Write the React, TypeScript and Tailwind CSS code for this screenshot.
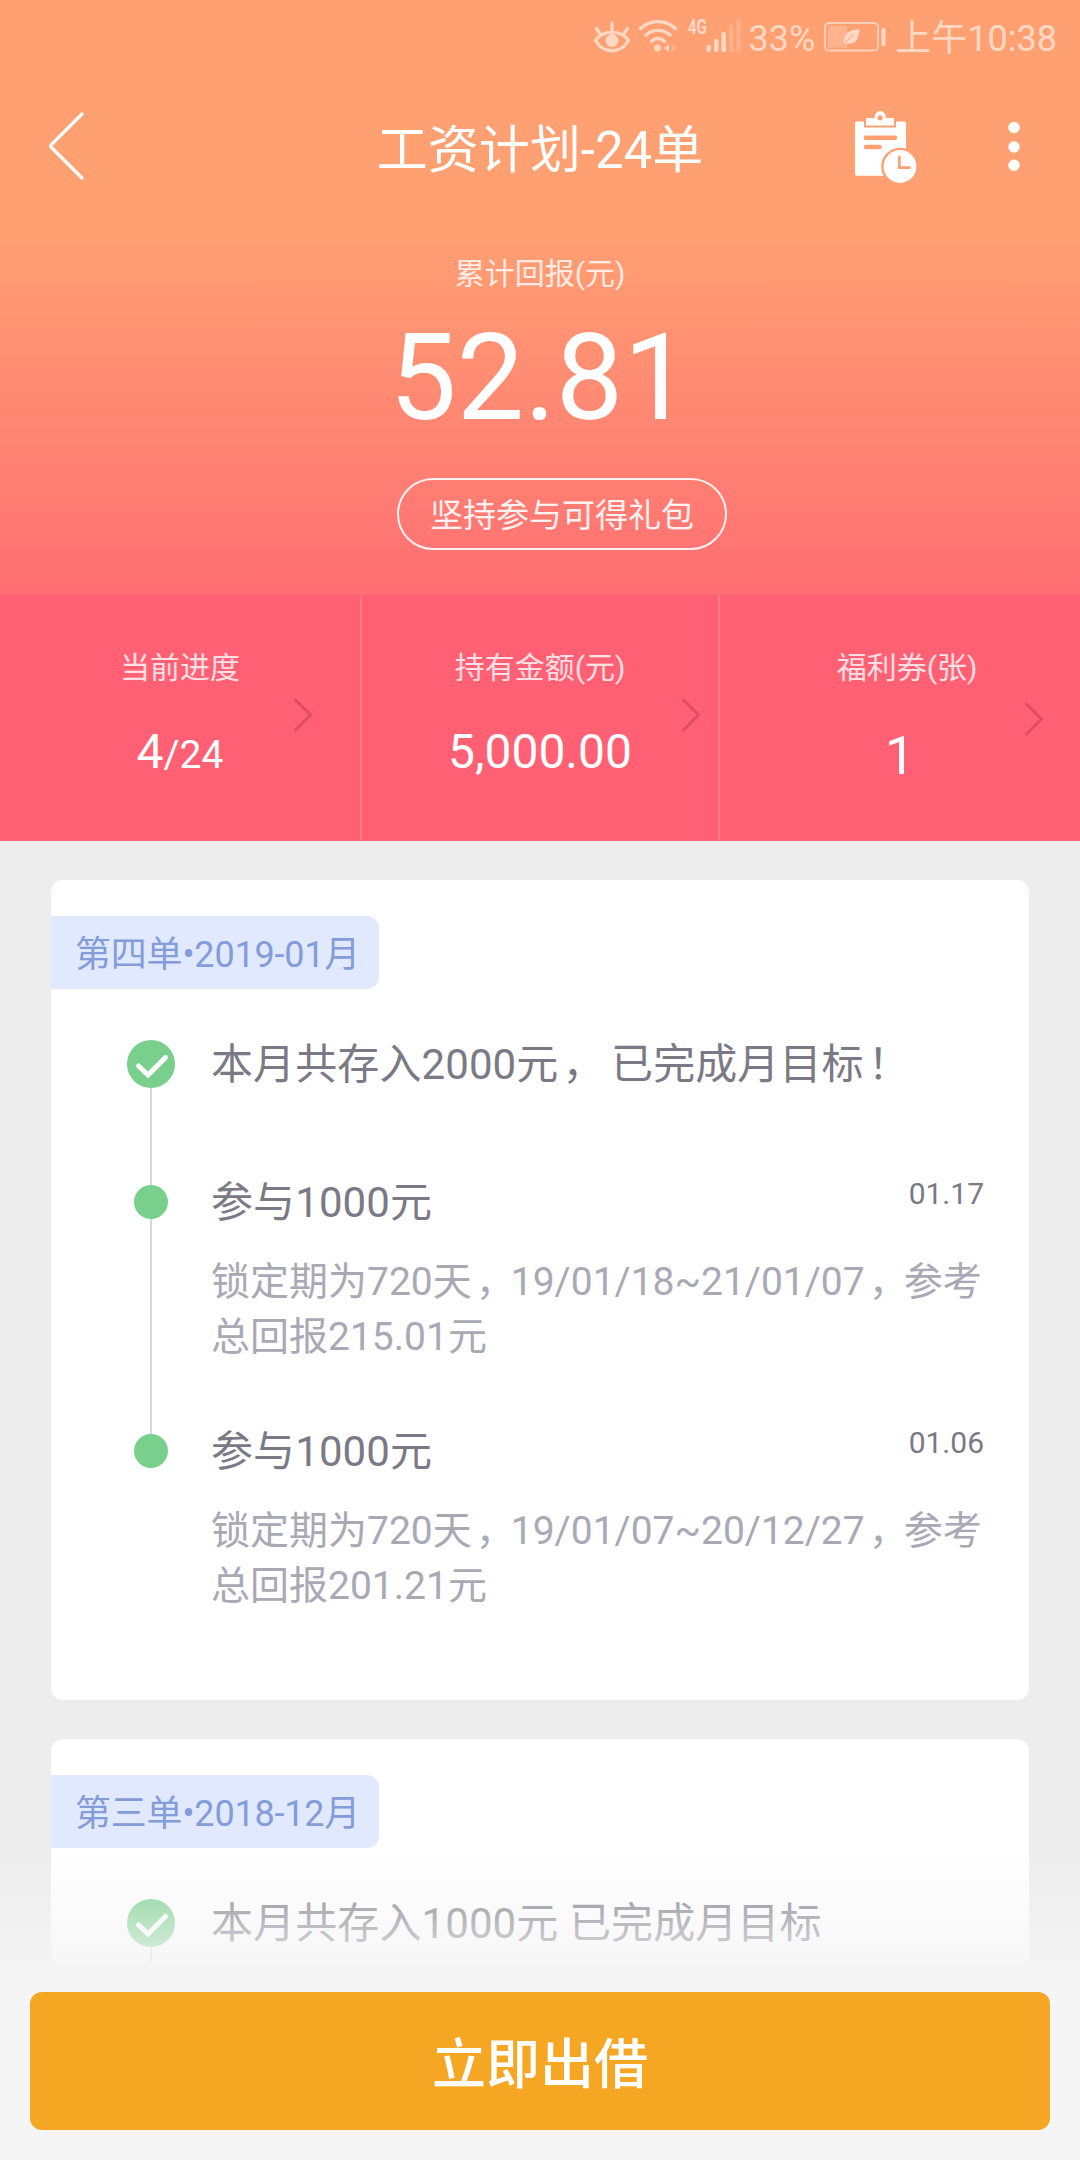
import type { ReactNode } from "react";

import clsx from "clsx";

type Stat = {
  key: string;
  label: string;
  value: ReactNode;
  className?: string;
  labelClassName?: string;
  valueClassName: string;
  arrowClassName: string;
};

type Deposit = {
  title: string;
  date: string;
  lines: string[];
};

type Order = {
  key: string;
  badge: string;
  summary: string;
  deposits: Deposit[];
};

const STATS: Stat[] = [
  {
    key: "progress",
    label: "当前进度",
    value: (
      <>
        4<span className="text-[39px]">/24</span>
      </>
    ),
    className: "border-r-2 border-[#ff7f77]",
    valueClassName: "mt-8 text-[48px]",
    arrowClassName: "mr-[47px] mt-[102px]",
  },
  {
    key: "holding",
    label: "持有金额(元)",
    value: "5,000.00",
    className: "border-r-2 border-[#ff7f77]",
    valueClassName: "mt-8 text-[48px]",
    arrowClassName: "mr-[17px] mt-[102px]",
  },
  {
    key: "coupon",
    label: "福利券(张)",
    value: "1",
    labelClassName: "pl-[14px]",
    valueClassName: "mt-9 text-[54px]",
    arrowClassName: "mr-9 mt-[106px]",
  },
];

const ORDERS: Order[] = [
  {
    key: "2019-01",
    badge: "第四单•2019-01月",
    summary: "本月共存入2000元， 已完成月目标！",
    deposits: [
      { title: "参与1000元", date: "01.17", lines: ["锁定期为720天，19/01/18~21/01/07，参考", "总回报215.01元"] },
      { title: "参与1000元", date: "01.06", lines: ["锁定期为720天，19/01/07~20/12/27，参考", "总回报201.21元"] },
    ],
  },
  {
    key: "2018-12",
    badge: "第三单•2018-12月",
    summary: "本月共存入1000元 已完成月目标",
    deposits: [],
  },
];

function renderText(text: string) {
  return text.split(/([，！])/).map((part, index) =>
    part === "，" || part === "！" ? (
      <span key={index} className="mr-[calc(0.5em-4px)] ml-[4px] [font-feature-settings:'halt']">
        {part}
      </span>
    ) : (
      part
    ),
  );
}

function EyeIcon() {
  return (
    <svg className="h-9 w-[38px]" viewBox="0 0 38 36" fill="none" stroke="currentColor" strokeWidth="3.2" strokeLinecap="round" strokeLinejoin="round">
      <path d="M2.5 21.5C10 10.5 28 10.5 35.5 21.5C28 35 10 35 2.5 21.5Z" />
      <path d="M19 4V11M3.5 9.5L7 14.5M34.5 9.5L31 14.5" />
      <circle cx="19" cy="21.5" r="6.4" fill="currentColor" stroke="none" />
    </svg>
  );
}

function WifiIcon() {
  return (
    <svg className="h-9 w-10" viewBox="0 0 40 36" fill="none" stroke="currentColor" strokeWidth="3.4">
      <path d="M1.5 10.5C12 0 28 0 38.5 10.5" />
      <path d="M7 17C14 9.5 26 9.5 33 17" />
      <path d="M12.5 23.5C17 18 23 18 27.5 23.5" />
      <circle cx="19.5" cy="29" r="3.4" fill="currentColor" stroke="none" />
      <path d="M31 25V33L26 29Z" fill="currentColor" stroke="none" />
      <path d="M33.5 25V33L39 29Z" fill="currentColor" stroke="none" opacity="0.35" />
    </svg>
  );
}

function SignalIcon() {
  return (
    <svg className="h-9 w-[36px]" viewBox="0 0 36 36" fill="currentColor">
      <rect x="0.5" y="26" width="4.5" height="7" rx="2" />
      <rect x="8" y="20" width="4.5" height="13" rx="1.8" />
      <rect x="15.5" y="13" width="4.5" height="20" rx="1.8" />
      <rect x="23" y="6" width="4.5" height="27" rx="1.8" opacity="0.3" />
      <rect x="30.5" y="0" width="4.5" height="33" rx="1.8" opacity="0.3" />
    </svg>
  );
}

function BatteryIcon() {
  return (
    <svg className="h-9 w-[62px]" viewBox="0 0 62 36" fill="none">
      <rect x="1" y="4" width="53" height="27.5" rx="4" stroke="currentColor" strokeWidth="1.8" opacity="0.85" />
      <rect x="4" y="7" width="19" height="21.5" fill="currentColor" opacity="0.35" />
      <rect x="57.5" y="9" width="4" height="18" rx="1.5" fill="currentColor" />
      <path d="M20 26C19 15 24 11 35.5 10C35 20 31 26.5 22.5 24.5Z" fill="currentColor" />
      <path d="M19.5 27C22 22 25 19 29.5 16" stroke="#ffa072" strokeWidth="1" />
    </svg>
  );
}

function BackIcon() {
  return (
    <svg className="h-[72px] w-[38px]" viewBox="0 0 38 72" fill="none" stroke="currentColor" strokeWidth="3.2" strokeLinecap="round" strokeLinejoin="round">
      <path d="M35 4L4.5 34.5Q3 36 4.5 37.5L35 68" />
    </svg>
  );
}

function ClipboardClockIcon() {
  return (
    <svg className="h-[74px] w-[64px]" viewBox="0 0 64 74" fill="none">
      <path d="M3 12.5H10V18.5H42V12.5H50Q52 12.5 52 14.5V66.7H3Q1 66.7 1 64.7V14.5Q1 12.5 3 12.5Z" fill="currentColor" />
      <path d="M12.5 9H20.5C21 -0.5 31.5 -0.5 32 9H39Q40 9 40 10V16.5H12V9.5Q12 9 12.5 9Z" fill="currentColor" />
      <circle cx="26.2" cy="8.8" r="2.6" fill="#ffa072" />
      <path d="M12 28.7H41M12 38H25.5" stroke="#ffa072" strokeWidth="4.6" strokeLinecap="round" />
      <circle cx="46" cy="57.5" r="18.8" fill="#ffa072" />
      <circle cx="46" cy="57.5" r="16.4" fill="currentColor" />
      <path d="M45.3 48V58.7H55.5" stroke="#ffa072" strokeWidth="2.8" strokeLinecap="round" />
    </svg>
  );
}

function MoreIcon() {
  return (
    <svg className="h-[50px] w-3" viewBox="0 0 12 50" fill="currentColor">
      <circle cx="6" cy="6.5" r="5.7" />
      <circle cx="6" cy="26" r="5.7" />
      <circle cx="6" cy="44.3" r="5.7" />
    </svg>
  );
}

function ChevronIcon({ className }: { className?: string }) {
  return (
    <svg className={clsx("h-9 w-5", className)} viewBox="0 0 20 36" fill="none" stroke="#dd4e65" strokeWidth="3" strokeLinecap="round">
      <path d="M2.5 3L17.5 18L2.5 33" />
    </svg>
  );
}

function CheckIcon() {
  return (
    <svg className="size-12 shrink-0" viewBox="0 0 48 48" fill="none">
      <circle cx="24" cy="24" r="24" fill="#78d08c" />
      <path d="M11.5 26L21 35L38.5 17.5" stroke="#fff" strokeWidth="5" strokeLinecap="round" />
    </svg>
  );
}

function StatusBar() {
  return (
    <div className="flex h-[74px] items-center justify-end pr-[23px] text-[36px] leading-none text-[#ffd8c4]">
      <EyeIcon />
      <span className="ml-[7px]">
        <WifiIcon />
      </span>
      <span className="mb-5 ml-2.5 w-[18px] origin-left scale-x-75 text-[20px] font-bold">4G</span>
      <SignalIcon />
      <span className="ml-[7px] pt-[3px]">33%</span>
      <span className="ml-[9px]">
        <BatteryIcon />
      </span>
      <span className="ml-[9px] pt-[3px]">上午10:38</span>
    </div>
  );
}

function StatCell({ stat }: { stat: Stat }) {
  return (
    <div className={clsx("grid", stat.className)}>
      <div className="col-start-1 row-start-1 flex flex-col items-center pt-[51px]">
        <p className={clsx("h-11 text-[30px] leading-[44px] text-white/80", stat.labelClassName)}>{stat.label}</p>
        <p className={clsx("h-15 leading-[60px]", stat.valueClassName)}>{stat.value}</p>
      </div>
      <ChevronIcon className={clsx("col-start-1 row-start-1 justify-self-end", stat.arrowClassName)} />
    </div>
  );
}

function OrderCard({ order }: { order: Order }) {
  return (
    <section className="h-[820px] shrink-0 rounded-xl bg-white pt-9">
      <h2 className="h-[73px] w-[328px] rounded-r-xl bg-[#e1e9fe] pt-[5px] pl-6 text-[36px] leading-[69px] tracking-[-0.2px] whitespace-nowrap text-[#849cda]">
        {order.badge}
      </h2>
      <ol className="mt-[51px] pr-[45px] pl-[76px]">
        <li className="flex h-[145px] gap-9">
          <div className="flex w-12 flex-col items-center">
            <CheckIcon />
            <span className="w-0.5 flex-1 bg-[#d8d8d8]" />
          </div>
          <p className="text-[42px] leading-[50px] tracking-[0.1px] whitespace-nowrap text-[#7a7985]">
            {renderText(order.summary)}
          </p>
        </li>
        {order.deposits.map((deposit, index) => (
          <li key={deposit.date} className="flex h-[249px] gap-9">
            <div className="flex w-12 flex-col items-center">
              <span className="size-[34px] rounded-full bg-[#78d08c]" />
              {index < order.deposits.length - 1 ? <span className="w-0.5 flex-1 bg-[#d8d8d8]" /> : null}
            </div>
            <div className="flex-1">
              <div className="flex h-[33px] justify-between text-[#7a7985]">
                <h3 className="text-[42px] leading-[36px] tracking-[0.1px]">{deposit.title}</h3>
                <time className="text-[30px] leading-[17px]">{deposit.date}</time>
              </div>
              <div className="mt-[37px] text-[39px] leading-[55px] whitespace-nowrap text-[#a9a9b6]">
                {deposit.lines.map((line) => (
                  <p key={line}>{renderText(line)}</p>
                ))}
              </div>
            </div>
          </li>
        ))}
      </ol>
    </section>
  );
}

export default function App() {
  return (
    <div className="flex h-[2160px] w-[1080px] flex-col overflow-hidden bg-[#ededed] font-['Roboto','Noto_Sans_CJK_SC',sans-serif] text-white">
      <header className="flex h-[595px] flex-col bg-linear-to-b from-[#ffa072] from-[38%] to-[#ff6e73]">
        <StatusBar />
        <div className="grid h-36 grid-cols-[1fr_auto_1fr] items-center">
          <span className="pl-[47px]">
            <BackIcon />
          </span>
          <h1 className="pt-[9px] text-[51px] leading-[60px]">工资计划-24单</h1>
          <div className="flex items-center justify-end gap-[90px] pr-[60px]">
            <ClipboardClockIcon />
            <MoreIcon />
          </div>
        </div>
        <div className="flex flex-col items-center pt-[34px]">
          <p className="h-11 text-[30px] leading-[44px] text-white/80">累计回报(元)</p>
          <p className="mt-3 text-[120px] leading-[140px]">52.81</p>
          <button className="mt-[30px] ml-11 h-[72px] w-[330px] rounded-full border-2 border-white/90 pt-1 text-[33px] leading-[64px] text-white/90">
            坚持参与可得礼包
          </button>
        </div>
      </header>

      <section className="grid h-[246px] grid-cols-[362px_358px_360px] bg-[#ff6074]">
        {STATS.map((stat) => (
          <StatCell key={stat.key} stat={stat} />
        ))}
      </section>

      <main className="relative flex flex-1 flex-col gap-[39px] overflow-hidden px-[51px] pt-[39px]">
        {ORDERS.map((order) => (
          <OrderCard key={order.key} order={order} />
        ))}
        <div className="absolute inset-x-0 bottom-0 h-[112px] bg-linear-to-b from-[#f5f5f5]/0 to-[#f5f5f5]/80" />
      </main>

      <footer className="h-[198px] bg-[#f5f5f5] px-[30px] pt-[30px]">
        <button className="h-[138px] w-full rounded-xl bg-[#f5a623] pt-2.5 text-[54px] leading-none font-medium">立即出借</button>
      </footer>
    </div>
  );
}
